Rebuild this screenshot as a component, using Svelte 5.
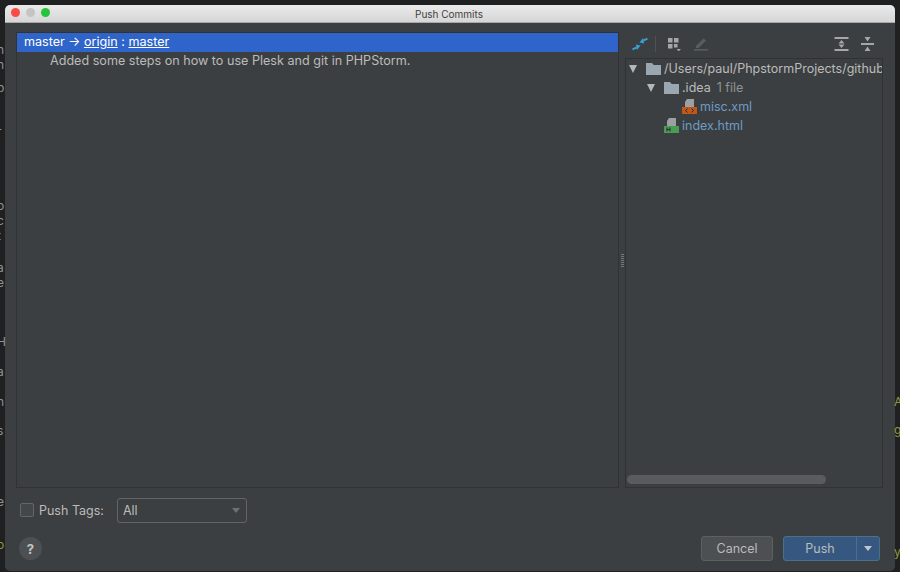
<script>
	const leftScraps = [
		['n', 44], ['h', 59], ['p', 82], ['r', 126], ['o', 200], ['c', 215], ['t', 230], ['l', 245], ['a', 262], ['e', 277], ['H', 336], ['a', 366], ['n', 396], ['s', 425], ['e', 496]
	]
	const rightScraps = [
		['A', 396], ['g', 424], ['y', 546]
	]
</script>

<div class="desktop">
	{#each leftScraps as [ch, y]}
		<span class="scrap left" style="top: {y}px">{ch}</span>
	{/each}
	{#each rightScraps as [ch, y]}
		<span class="scrap right" style="top: {y}px">{ch}</span>
	{/each}
	<span class="scrap left green" style="top: 539px">o</span>

	<div class="window">
		<header class="titlebar">
			<div class="lights">
				<span class="light red"></span>
				<span class="light grey"></span>
				<span class="light green"></span>
			</div>
			<span class="title">Push Commits</span>
		</header>

		<div class="body">
			<div class="panels">
				<section class="commits">
					<div class="branch-row">
						master → <u>origin</u> : <u>master</u>
					</div>
					<div class="commit-row">Added some steps on how to use Plesk and git in PHPStorm.</div>
				</section>

				<div class="splitter">
					<span class="grip"></span>
				</div>

				<section class="changes">
					<div class="toolbar">
						<svg width="16" height="16" viewBox="0 0 16 16">
							<path d="M15.5 2.6 L11 4.6" stroke="#389fd6" stroke-width="2" fill="none" />
							<path d="M7.5 6.5 L11 2 L12 7.5 Z" fill="#389fd6" />
							<path d="M0.5 13.4 L5 11.4" stroke="#389fd6" stroke-width="2" fill="none" />
							<path d="M8.5 9.5 L5 14 L4 8.5 Z" fill="#389fd6" />
						</svg>
						<span class="sep"></span>
						<svg class="group" width="15" height="16" viewBox="0 0 15 16">
							<rect x="1" y="2" width="4.5" height="4.5" fill="#a4a6a8" />
							<rect x="7" y="2" width="4.5" height="4.5" fill="#a4a6a8" />
							<rect x="1" y="8" width="4.5" height="4.5" fill="#a4a6a8" />
							<rect x="7" y="8" width="3.5" height="3.5" fill="#a4a6a8" />
							<path d="M9.5 13 H14 L11.75 15.2 Z" fill="#a4a6a8" />
						</svg>
						<svg class="pencil" width="16" height="16" viewBox="0 0 16 16">
							<path d="M3 10 L10.5 2.5 L13 4.5 L5.5 12 L3 12 Z" fill="#5a5d5f" />
							<rect x="1" y="13" width="14" height="1.6" fill="#5a5d5f" />
						</svg>
						<span class="spacer"></span>
						<svg width="15" height="16" viewBox="0 0 15 16">
							<rect x="0.5" y="1" width="14" height="2" fill="#a4a6a8" />
							<rect x="0.5" y="13" width="14" height="2" fill="#a4a6a8" />
							<path d="M7.5 4 L10.5 7.4 H4.5 Z M7.5 12 L4.5 8.6 H10.5 Z" fill="#a4a6a8" />
						</svg>
						<svg class="collapse" width="15" height="16" viewBox="0 0 15 16">
							<rect x="1" y="7" width="13" height="2" fill="#a4a6a8" />
							<path d="M4.5 1 H10.5 L7.5 5.6 Z M4.5 15 H10.5 L7.5 10.4 Z" fill="#a4a6a8" />
						</svg>
					</div>

					<div class="tree">
						<div class="tree-scroll">
							<div class="node depth0">
								<span class="arrow"></span>
								<svg class="folder" width="15" height="13" viewBox="0 0 15 13">
									<path d="M0 1 H6 L7.6 3 H15 V13 H0 Z" fill="#9aa7b0" />
								</svg>
								<span class="path">/Users/paul/PhpstormProjects/github</span>
							</div>
							<div class="node depth1">
								<span class="arrow"></span>
								<svg class="folder" width="15" height="13" viewBox="0 0 15 13">
									<path d="M0 1 H6 L7.6 3 H15 V13 H0 Z" fill="#9aa7b0" />
								</svg>
								<span class="path">.idea</span>
								<span class="count">1 file</span>
							</div>
							<div class="node depth2">
								<svg class="file" width="16" height="15" viewBox="0 0 16 15">
									<path d="M5 0 H12 V8 H3 V3 Z" fill="#9da0a2" />
									<rect x="0" y="8" width="15" height="7" fill="#c2571a" />
									<path d="M5.5 9.6 L3.5 11.5 L5.5 13.4 M9.5 9.6 L11.5 11.5 L9.5 13.4" stroke="#2b2b2b" fill="none" />
								</svg>
								<span class="name">misc.xml</span>
							</div>
							<div class="node depth1b">
								<svg class="file" width="16" height="15" viewBox="0 0 16 15">
									<path d="M5 0 H12 V8 H3 V3 Z" fill="#9da0a2" />
									<rect x="0" y="8" width="15" height="7" fill="#499c54" />
									<path d="M3 9.5 V13.5 M6 9.5 V13.5 M3 11.5 H6" stroke="#2b2b2b" fill="none" />
								</svg>
								<span class="name">index.html</span>
							</div>
						</div>
						<div class="hscroll">
							<span class="thumb"></span>
						</div>
					</div>
				</section>
			</div>

			<div class="tags-row">
				<span class="checkbox"></span>
				<span class="tags-label">Push Tags:</span>
				<div class="select">
					<span>All</span>
					<span class="select-arrow"></span>
				</div>
			</div>

			<div class="footer">
				<span class="help">?</span>
				<span class="spacer"></span>
				<button class="cancel">Cancel</button>
				<div class="push">
					<button class="push-main">Push</button>
					<button class="push-more" aria-label="More"><span class="more-arrow"></span></button>
				</div>
			</div>
		</div>
	</div>
</div>

<style>
	:global(body) {
		margin: 0;
		background: #1f2022;
	}
	.desktop {
		position: relative;
		box-sizing: border-box;
		width: 900px;
		height: 572px;
		padding: 5px 5px 1px 5px;
		overflow: hidden;
		background: #1f2022;
		font-family: 'Inter', 'Liberation Sans', sans-serif;
	}
	.scrap {
		position: absolute;
		font-size: 12px;
		line-height: 11px;
		color: #8f9396;
	}
	.scrap.left {
		left: -3px;
	}
	.scrap.right {
		left: 894px;
		color: #8c9a3c;
	}
	.scrap.green {
		color: #8c9a3c;
	}
	.window {
		display: flex;
		flex-direction: column;
		height: 100%;
		border-radius: 5px;
		overflow: hidden;
		background: #3c3f41;
	}
	.titlebar {
		position: relative;
		display: flex;
		align-items: center;
		justify-content: center;
		flex: none;
		height: 17px;
		padding-right: 2px;
		background: linear-gradient(#eaeaea, #d6d6d6);
		border-bottom: 1px solid #a9a9a9;
	}
	.lights {
		position: absolute;
		left: 6px;
		top: 3px;
		display: flex;
		gap: 6px;
	}
	.light {
		width: 9px;
		height: 9px;
		border-radius: 50%;
	}
	.light.red {
		background: #fb4c45;
	}
	.light.grey {
		background: #c4c4c4;
	}
	.light.green {
		background: #27c43a;
	}
	.title {
		font-size: 10px;
		color: #3f3f3f;
	}
	.body {
		flex: 1;
		display: flex;
		flex-direction: column;
		min-height: 0;
		padding: 9px 12px 0 11px;
	}
	.panels {
		flex: none;
		display: flex;
		height: 456px;
	}
	.commits {
		flex: none;
		width: 603px;
		box-sizing: border-box;
		border: 1px solid #323232;
		background: #3c3f41;
	}
	.branch-row {
		height: 19px;
		line-height: 18px;
		padding-left: 7px;
		background: #2f65ca;
		color: #fff;
		font-size: 12.6px;
		white-space: pre;
	}
	.commit-row {
		height: 19px;
		line-height: 18px;
		padding-left: 33px;
		color: #bbb;
		font-size: 12.6px;
	}
	.splitter {
		flex: none;
		display: flex;
		align-items: center;
		justify-content: center;
		width: 6px;
	}
	.grip {
		width: 3px;
		height: 13px;
		background: repeating-linear-gradient(#75787a 0 1px, #3c3f41 1px 2px);
		margin-left: 1px;
	}
	.changes {
		flex: 1;
		display: flex;
		flex-direction: column;
		min-width: 0;
	}
	.toolbar {
		display: flex;
		align-items: center;
		gap: 7px;
		flex: none;
		height: 24px;
		padding: 0 8px 2px 7px;
	}
	.sep {
		width: 1px;
		height: 16px;
		background: #4f5254;
	}
	.group {
		margin-left: 4px;
	}
	.pencil {
		margin-left: 4px;
	}
	.collapse {
		margin-left: 4px;
	}
	.spacer {
		flex: 1;
	}
	.tree {
		flex: 1;
		display: flex;
		flex-direction: column;
		min-height: 0;
		border: 1px solid #323232;
	}
	.tree-scroll {
		flex: 1;
		overflow: hidden;
	}
	.node {
		display: flex;
		align-items: center;
		height: 19px;
		font-size: 12.5px;
		white-space: nowrap;
	}
	.depth0 {
		padding-left: 3px;
	}
	.depth1 {
		padding-left: 21px;
	}
	.depth2 {
		padding-left: 56px;
	}
	.depth1b {
		padding-left: 38px;
	}
	.arrow {
		flex: none;
		width: 0;
		height: 0;
		margin-right: 9px;
		border-left: 4.5px solid transparent;
		border-right: 4.5px solid transparent;
		border-top: 8px solid #b4b7b9;
	}
	.folder {
		flex: none;
		margin-right: 3px;
	}
	.file {
		flex: none;
		margin-right: 2px;
	}
	.path {
		color: #bbb;
	}
	.count {
		margin-left: 6px;
		color: #8f9294;
	}
	.name {
		color: #6b9cc4;
	}
	.hscroll {
		flex: none;
		height: 12px;
		padding: 0 1px;
	}
	.thumb {
		display: block;
		width: 199px;
		height: 9px;
		border-radius: 5px;
		background: #595b5d;
	}
	.tags-row {
		flex: none;
		display: flex;
		align-items: center;
		height: 26px;
		margin-top: 9px;
		padding-left: 4px;
	}
	.checkbox {
		flex: none;
		box-sizing: border-box;
		width: 14px;
		height: 14px;
		border: 1px solid #646769;
		border-radius: 2px;
		background: #43474a;
	}
	.tags-label {
		margin-left: 5px;
		font-size: 12.5px;
		color: #bbb;
	}
	.select {
		display: flex;
		align-items: center;
		justify-content: space-between;
		box-sizing: border-box;
		width: 130px;
		height: 25px;
		margin-left: 13px;
		padding: 0 6px 0 5px;
		border: 1px solid #646464;
		border-radius: 3px;
		color: #bbb;
		font-size: 12.5px;
	}
	.select-arrow {
		width: 0;
		height: 0;
		border-left: 4.5px solid transparent;
		border-right: 4.5px solid transparent;
		border-top: 5px solid #6e7173;
	}
	.footer {
		flex: none;
		display: flex;
		align-items: center;
		height: 25px;
		margin-top: 13px;
		padding-left: 3px;
		padding-right: 3px;
	}
	.help {
		display: flex;
		align-items: center;
		justify-content: center;
		width: 23px;
		height: 23px;
		border-radius: 50%;
		background: #4d5052;
		color: #c4c6c8;
		font-size: 13px;
		font-weight: 700;
	}
	button {
		font-family: inherit;
		font-size: 12.5px;
		margin: 0;
		padding: 0;
		box-sizing: border-box;
	}
	.cancel {
		width: 72px;
		height: 25px;
		margin-right: 10px;
		border: 1px solid #5e6060;
		border-radius: 3px;
		background: #4c5052;
		color: #bbb;
	}
	.push {
		display: flex;
		width: 97px;
		height: 25px;
		border: 1px solid #4c708c;
		border-radius: 3px;
		box-sizing: border-box;
		background: #365880;
	}
	.push-main {
		width: 73px;
		border: none;
		border-right: 1px solid #4c708c;
		background: transparent;
		color: #bbbbbb;
	}
	.push-more {
		flex: 1;
		display: flex;
		align-items: center;
		justify-content: center;
		border: none;
		background: transparent;
	}
	.more-arrow {
		width: 0;
		height: 0;
		border-left: 4.5px solid transparent;
		border-right: 4.5px solid transparent;
		border-top: 5px solid #c4c6c8;
	}
</style>
